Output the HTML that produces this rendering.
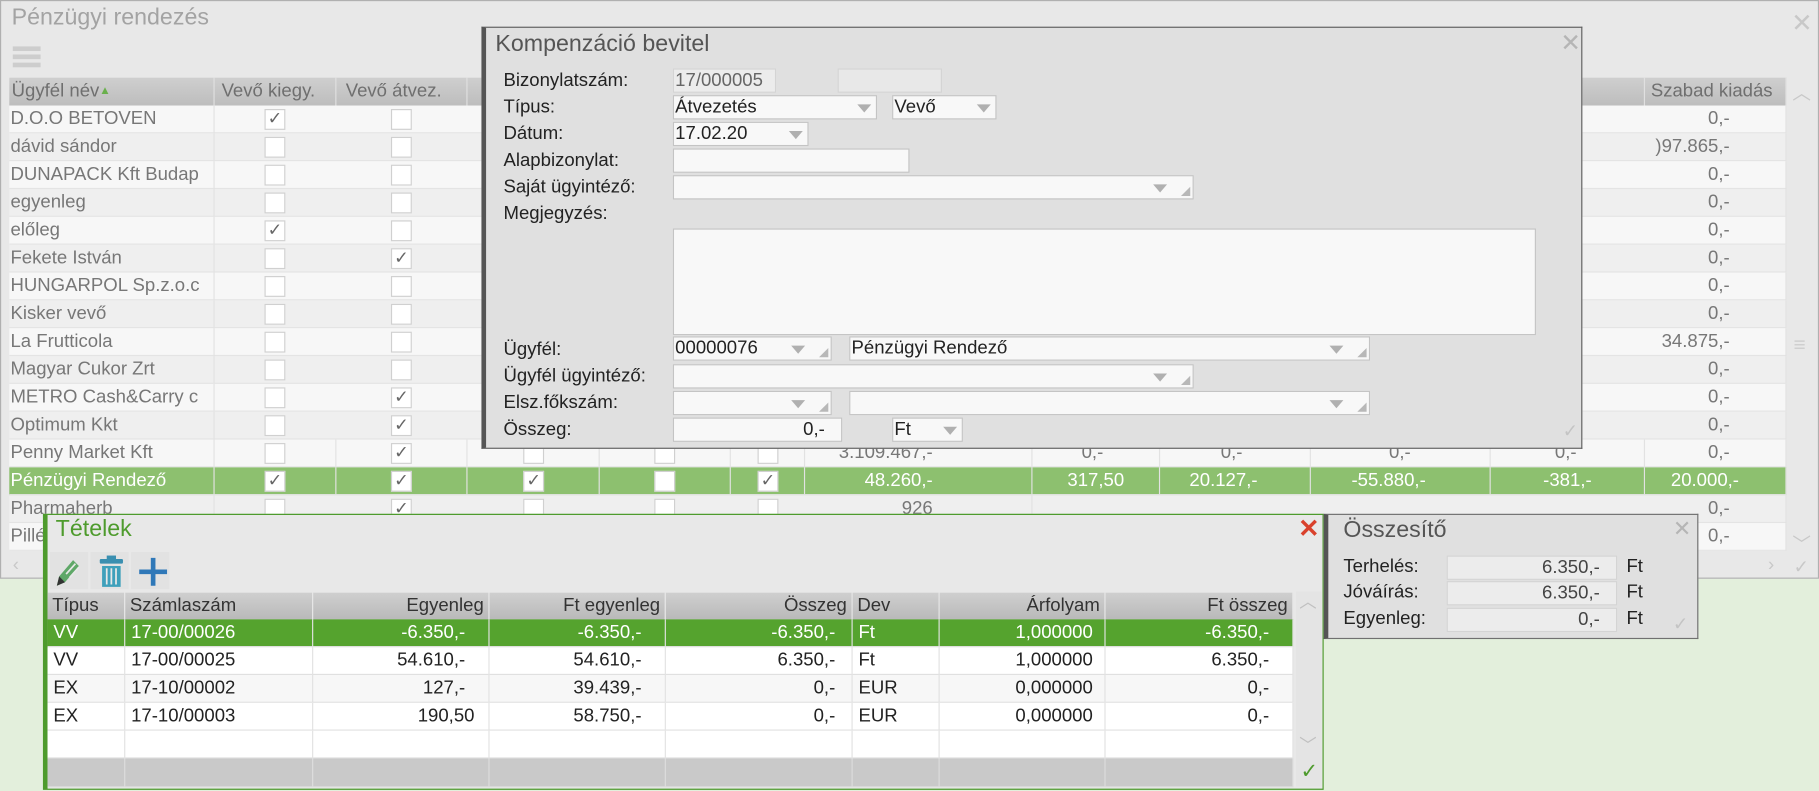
<!DOCTYPE html>
<html><head><meta charset="utf-8">
<style>
*{box-sizing:border-box;margin:0;padding:0}
html,body{width:1819px;height:791px;overflow:hidden;background:#e3efdc}
#s{position:absolute;left:0;top:0;width:1568px;height:682px;transform:scale(1.1601,1.1598);transform-origin:0 0;font-family:"Liberation Sans",sans-serif}
.a{position:absolute}
.main{left:0;top:0;width:1568px;height:499px;background:#e8e8e8;border:1px solid #b0b0b0}
.row{position:absolute;left:8px;width:1532px;height:24px;border-bottom:1px solid #e4e4e4;font-size:16px;color:#777}
.row.o{background:#f7f7f7}.row.e{background:#efefef}
.row.g{background:#8dc06f;color:#fff}
.c{position:absolute;top:0;height:24px;line-height:24px;border-right:1px solid #e2e2e2;overflow:hidden;white-space:nowrap}
.n{padding-left:1px}
.r{text-align:right;padding-right:6px}
.cb{position:absolute;top:3px;width:18px;height:18px;background:#fff;border:1px solid #d0d0d0;font-size:15px;line-height:16px;text-align:center;color:#666}
.hd{position:absolute;left:8px;top:67px;width:1532px;height:24px;background:linear-gradient(#cfcfcf,#bdbdbd);font-size:16px;color:#6f6f6f}
.hd div{position:absolute;top:0;height:24px;line-height:24px;border-right:1px solid #e0e0e0;padding-left:2px;white-space:nowrap;overflow:hidden}
.dlg{left:415px;top:23px;width:949px;height:364px;background:#e0e0e0;border:1px solid #606060;border-left:4px solid #555}
.lb{position:absolute;left:15px;font-size:16px;color:#222}
.in{position:absolute;height:21px;background:#f8f8f8;border:1px solid #c4c4c4;font-size:16px;line-height:19px;color:#222;padding-left:1px;white-space:nowrap}
.dd{position:absolute;top:7px;width:0;height:0;border-left:6px solid transparent;border-right:6px solid transparent;border-top:7px solid #b0b0b0}
.rs{position:absolute;bottom:2px;width:0;height:0;border-left:8px solid transparent;border-bottom:8px solid #b8b8b8}
.tet{left:37px;top:443px;width:1104px;height:238px;background:#e8e8e8;border:1px solid #4e9b2d;border-left:4px solid #4e9b2d}
.th{position:absolute;top:511px;height:23px;background:linear-gradient(#cfcfcf,#b9b9b9);font-size:16px;color:#333;line-height:23px;border-right:1px solid #e6e6e6;padding:0 4px;font-family:"Liberation Sans Narrow","Liberation Sans",sans-serif}
.tr{position:absolute;left:41px;width:1074px;height:24px;border-bottom:1px solid #e0e0e0;font-size:16px;color:#222;font-family:"Liberation Sans Narrow","Liberation Sans",sans-serif}
.tr div{position:absolute;top:0;height:24px;line-height:24px;border-right:1px solid #e2e2e2;padding:0 5px;white-space:nowrap}
.sum{left:1141px;top:443px;width:323px;height:108px;background:#e0e0e0;border:1px solid #707070;border-left:4px solid #555}
</style></head><body><div id="s">

<div class="a main">
 <div class="a" style="left:9px;top:3px;font-size:20px;color:#a3a3a3">Pénzügyi rendezés</div>
 <div class="a" style="left:10px;top:39px;width:24px;height:4px;background:#cdcdcd"></div>
 <div class="a" style="left:10px;top:46px;width:24px;height:4px;background:#cdcdcd"></div>
 <div class="a" style="left:10px;top:53px;width:24px;height:4px;background:#cdcdcd"></div>
 <div class="a" style="left:1543px;top:6px;font-size:22px;color:#c8c8c8">✕</div>
 <div class="a" style="left:1544px;top:66px;font-size:16px;color:#c8c8c8">︿</div>
 <div class="a" style="left:1545px;top:286px;font-size:18px;color:#cfcfcf">≡</div>
 <div class="a" style="left:1544px;top:455px;font-size:16px;color:#c8c8c8">﹀</div>
 <div class="a" style="left:10px;top:478px;font-size:16px;color:#c8c8c8">‹</div>
 <div class="a" style="left:1523px;top:478px;font-size:16px;color:#c8c8c8">›</div>
 <div class="a" style="left:1545px;top:478px;font-size:16px;color:#c8c8c8">✓</div>
</div>

<div class="hd">
 <div style="left:0;width:177px">Ügyfél név<span style="color:#6ab04c;font-size:10px;vertical-align:top">▲</span></div>
 <div style="left:177px;width:105px;padding-left:6px">Vevő kiegy.</div>
 <div style="left:282px;width:113px;padding-left:8px">Vevő átvez.</div>
 <div style="left:395px;width:114px"></div>
 <div style="left:1285px;width:125px;padding-left:0">Egyenleg</div>
 <div style="left:1410px;width:122px;padding-left:5px">Szabad kiadás</div>
</div>

<div class="row o" style="top:91px"><div class="c n" style="left:0;width:177px">D.O.O BETOVEN</div><div class="cb" style="left:220px">✓</div><div class="cb" style="left:329px"></div><div class="c r" style="left:1410px;width:122px;padding-right:48px">0,-</div></div>
<div class="row e" style="top:115px"><div class="c n" style="left:0;width:177px">dávid sándor</div><div class="cb" style="left:220px"></div><div class="cb" style="left:329px"></div><div class="c r" style="left:1410px;width:122px;padding-right:48px">)97.865,-</div></div>
<div class="row o" style="top:139px"><div class="c n" style="left:0;width:177px">DUNAPACK Kft Budap</div><div class="cb" style="left:220px"></div><div class="cb" style="left:329px"></div><div class="c r" style="left:1410px;width:122px;padding-right:48px">0,-</div></div>
<div class="row e" style="top:163px"><div class="c n" style="left:0;width:177px">egyenleg</div><div class="cb" style="left:220px"></div><div class="cb" style="left:329px"></div><div class="c r" style="left:1410px;width:122px;padding-right:48px">0,-</div></div>
<div class="row o" style="top:187px"><div class="c n" style="left:0;width:177px">előleg</div><div class="cb" style="left:220px">✓</div><div class="cb" style="left:329px"></div><div class="c r" style="left:1410px;width:122px;padding-right:48px">0,-</div></div>
<div class="row e" style="top:211px"><div class="c n" style="left:0;width:177px">Fekete István</div><div class="cb" style="left:220px"></div><div class="cb" style="left:329px">✓</div><div class="c r" style="left:1410px;width:122px;padding-right:48px">0,-</div></div>
<div class="row o" style="top:235px"><div class="c n" style="left:0;width:177px">HUNGARPOL Sp.z.o.c</div><div class="cb" style="left:220px"></div><div class="cb" style="left:329px"></div><div class="c r" style="left:1410px;width:122px;padding-right:48px">0,-</div></div>
<div class="row e" style="top:259px"><div class="c n" style="left:0;width:177px">Kisker vevő</div><div class="cb" style="left:220px"></div><div class="cb" style="left:329px"></div><div class="c r" style="left:1410px;width:122px;padding-right:48px">0,-</div></div>
<div class="row o" style="top:283px"><div class="c n" style="left:0;width:177px">La Frutticola</div><div class="cb" style="left:220px"></div><div class="cb" style="left:329px"></div><div class="c r" style="left:1410px;width:122px;padding-right:48px">34.875,-</div></div>
<div class="row e" style="top:307px"><div class="c n" style="left:0;width:177px">Magyar Cukor Zrt</div><div class="cb" style="left:220px"></div><div class="cb" style="left:329px"></div><div class="c r" style="left:1410px;width:122px;padding-right:48px">0,-</div></div>
<div class="row o" style="top:331px"><div class="c n" style="left:0;width:177px">METRO Cash&amp;Carry c</div><div class="cb" style="left:220px"></div><div class="cb" style="left:329px">✓</div><div class="c r" style="left:1410px;width:122px;padding-right:48px">0,-</div></div>
<div class="row e" style="top:355px"><div class="c n" style="left:0;width:177px">Optimum Kkt</div><div class="cb" style="left:220px"></div><div class="cb" style="left:329px">✓</div><div class="c r" style="left:1410px;width:122px;padding-right:48px">0,-</div></div>
<div class="row o" style="top:379px"><div class="c n" style="left:0;width:177px">Penny Market Kft</div><div class="c" style="left:177px;width:105px"></div><div class="c" style="left:282px;width:113px"></div><div class="c" style="left:395px;width:114px"></div><div class="c" style="left:509px;width:113px"></div><div class="c" style="left:622px;width:64px"></div><div class="cb" style="left:220px"></div><div class="cb" style="left:329px">✓</div><div class="cb" style="left:443px"></div><div class="cb" style="left:556px"></div><div class="cb" style="left:645px"></div>
 <div class="c r" style="left:686px;width:196px;padding-right:85px">3.109.467,-</div><div class="c r" style="left:882px;width:110px;padding-right:48px">0,-</div><div class="c r" style="left:992px;width:130px;padding-right:58px">0,-</div><div class="c r" style="left:1122px;width:155px;padding-right:68px">0,-</div><div class="c r" style="left:1277px;width:133px;padding-right:58px">0,-</div><div class="c r" style="left:1410px;width:122px;padding-right:48px">0,-</div></div>
<div class="row g" style="top:403px"><div class="c n" style="left:0;width:177px">Pénzügyi Rendező</div><div class="c" style="left:177px;width:105px"></div><div class="c" style="left:282px;width:113px"></div><div class="c" style="left:395px;width:114px"></div><div class="c" style="left:509px;width:113px"></div><div class="c" style="left:622px;width:64px"></div><div class="cb" style="left:220px">✓</div><div class="cb" style="left:329px">✓</div><div class="cb" style="left:443px">✓</div><div class="cb" style="left:556px"></div><div class="cb" style="left:645px">✓</div>
 <div class="c r" style="left:686px;width:196px;padding-right:85px">48.260,-</div><div class="c r" style="left:882px;width:110px;padding-right:30px">317,50</div><div class="c r" style="left:992px;width:130px;padding-right:45px">20.127,-</div><div class="c r" style="left:1122px;width:155px;padding-right:55px">-55.880,-</div><div class="c r" style="left:1277px;width:133px;padding-right:45px">-381,-</div><div class="c r" style="left:1410px;width:122px;padding-right:40px">20.000,-</div></div>
<div class="row e" style="top:427px"><div class="c n" style="left:0;width:177px">Pharmaherb</div><div class="cb" style="left:220px"></div><div class="cb" style="left:329px">✓</div><div class="cb" style="left:443px"></div><div class="cb" style="left:556px"></div><div class="cb" style="left:645px"></div><div class="c r" style="left:686px;width:196px;padding-right:85px">926</div><div class="c r" style="left:1410px;width:122px;padding-right:48px">0,-</div></div>
<div class="row o" style="top:451px"><div class="c n" style="left:0;width:177px">Pillé</div><div class="c r" style="left:1410px;width:122px;padding-right:48px">0,-</div></div>

<div class="a dlg">
 <div class="a" style="left:8px;top:3px;font-size:20px;color:#555">Kompenzáció bevitel</div>
 <div class="a" style="left:926px;top:1px;font-size:21px;color:#b5b5b5">✕</div>
 <div class="a" style="left:928px;top:338px;font-size:16px;color:#c4c4c4">✓</div>
 <div class="lb" style="top:37px">Bizonylatszám:</div>
 <div class="lb" style="top:60px">Típus:</div>
 <div class="lb" style="top:83px">Dátum:</div>
 <div class="lb" style="top:106px">Alapbizonylat:</div>
 <div class="lb" style="top:129px">Saját ügyintéző:</div>
 <div class="lb" style="top:152px">Megjegyzés:</div>
 <div class="lb" style="top:269px">Ügyfél:</div>
 <div class="lb" style="top:292px">Ügyfél ügyintéző:</div>
 <div class="lb" style="top:315px">Elsz.főkszám:</div>
 <div class="lb" style="top:338px">Összeg:</div>
 <div class="in" style="left:161px;top:35px;width:89px;background:#ececec;color:#666;border-color:#d4d4d4">17/000005</div>
 <div class="in" style="left:303px;top:35px;width:90px;background:#e8e8e8;border-color:#d4d4d4"></div>
 <div class="in" style="left:161px;top:58px;width:176px">Átvezetés<div class="dd" style="right:4px"></div></div>
 <div class="in" style="left:350px;top:58px;width:90px">Vevő<div class="dd" style="right:4px"></div></div>
 <div class="in" style="left:161px;top:81px;width:117px">17.02.20<div class="dd" style="right:4px"></div></div>
 <div class="in" style="left:161px;top:104px;width:204px"></div>
 <div class="in" style="left:161px;top:127px;width:449px"><div class="dd" style="right:22px"></div><div class="rs" style="right:2px"></div></div>
 <div class="in" style="left:161px;top:173px;width:744px;height:92px;background:#f8f8f8"></div>
 <div class="in" style="left:161px;top:266px;width:137px">00000076<div class="dd" style="right:22px"></div><div class="rs" style="right:2px"></div></div>
 <div class="in" style="left:313px;top:266px;width:449px">Pénzügyi Rendező<div class="dd" style="right:22px"></div><div class="rs" style="right:2px"></div></div>
 <div class="in" style="left:161px;top:290px;width:449px"><div class="dd" style="right:22px"></div><div class="rs" style="right:2px"></div></div>
 <div class="in" style="left:161px;top:313px;width:137px"><div class="dd" style="right:22px"></div><div class="rs" style="right:2px"></div></div>
 <div class="in" style="left:313px;top:313px;width:449px"><div class="dd" style="right:22px"></div><div class="rs" style="right:2px"></div></div>
 <div class="in" style="left:161px;top:336px;width:146px;text-align:right;padding-right:14px">0,-</div>
 <div class="in" style="left:350px;top:336px;width:61px">Ft<div class="dd" style="right:4px"></div></div>
</div>

<div class="a tet">
 <div class="a" style="left:7px;top:1px;font-size:20px;color:#4e9b2d;font-family:'Liberation Sans Narrow','Liberation Sans',sans-serif">Tételek</div>
 <div class="a" style="left:1078px;top:-1px;font-size:22px;color:#d9412c;font-weight:bold">✕</div>
 <div class="a" style="left:2px;top:32px;width:33px;height:32px;background:#e2e2e2"></div>
 <div class="a" style="left:37px;top:32px;width:33px;height:32px;background:#e2e2e2"></div>
 <div class="a" style="left:72px;top:32px;width:33px;height:32px;background:#e2e2e2"></div>
 <svg class="a" style="left:4px;top:34px" width="30" height="30" viewBox="0 0 30 30"><path d="M4 27 L6 19 L18 5 L23 10 L11 24 Z" fill="#5fa868"/><path d="M4 27 L6 19 L11 24 Z" fill="#333"/><path d="M12 17 L20 8 M15 20 L23 11" stroke="#e8e8e8" stroke-width="1.5"/></svg>
 <svg class="a" style="left:42px;top:34px" width="26" height="30" viewBox="0 0 26 30"><rect x="9" y="1" width="8" height="3" fill="#3a8fb0"/><rect x="3" y="4" width="20" height="4" rx="1" fill="#3a8fb0"/><path d="M5 10 H21 V28 H5 Z" fill="#3ea0bb"/><path d="M9 12 V26 M13 12 V26 M17 12 V26" stroke="#e8e8e8" stroke-width="1.5"/></svg>
 <svg class="a" style="left:77px;top:35px" width="28" height="28" viewBox="0 0 28 28"><path d="M14 2 V26 M2 14 H26" stroke="#2f78b8" stroke-width="4"/></svg>
 <div class="a" style="left:1076px;top:66px;width:22px;height:168px;background:#e4e4e4"></div>
 <div class="a" style="left:1079px;top:64px;font-size:15px;color:#c0c0c0">︿</div>
 <div class="a" style="left:1079px;top:188px;font-size:15px;color:#c0c0c0">﹀</div>
 <div class="a" style="left:1080px;top:211px;font-size:18px;color:#4e9b2d">✓</div>
</div>
<div class="th" style="left:41px;width:67px">Típus</div>
<div class="th" style="left:108px;width:162px">Számlaszám</div>
<div class="th" style="left:270px;width:152px;text-align:right">Egyenleg</div>
<div class="th" style="left:422px;width:152px;text-align:right">Ft egyenleg</div>
<div class="th" style="left:574px;width:161px;text-align:right">Összeg</div>
<div class="th" style="left:735px;width:75px">Dev</div>
<div class="th" style="left:810px;width:143px;text-align:right">Árfolyam</div>
<div class="th" style="left:953px;width:162px;text-align:right">Ft összeg</div>

<div class="tr" style="top:534px;background:#55a32e;color:#fff"><div style="left:0;width:67px">VV</div><div style="left:67px;width:162px">17-00/00026</div><div style="left:229px;width:152px;text-align:right;padding-right:20px">-6.350,-</div><div style="left:381px;width:152px;text-align:right;padding-right:20px">-6.350,-</div><div style="left:533px;width:161px;text-align:right;padding-right:14px">-6.350,-</div><div style="left:694px;width:75px">Ft</div><div style="left:769px;width:143px;text-align:right;padding-right:10px">1,000000</div><div style="left:912px;width:162px;text-align:right;padding-right:20px">-6.350,-</div></div>
<div class="tr" style="top:558px;background:#fff"><div style="left:0;width:67px">VV</div><div style="left:67px;width:162px">17-00/00025</div><div style="left:229px;width:152px;text-align:right;padding-right:20px">54.610,-</div><div style="left:381px;width:152px;text-align:right;padding-right:20px">54.610,-</div><div style="left:533px;width:161px;text-align:right;padding-right:14px">6.350,-</div><div style="left:694px;width:75px">Ft</div><div style="left:769px;width:143px;text-align:right;padding-right:10px">1,000000</div><div style="left:912px;width:162px;text-align:right;padding-right:20px">6.350,-</div></div>
<div class="tr" style="top:582px;background:#f7f7f7"><div style="left:0;width:67px">EX</div><div style="left:67px;width:162px">17-10/00002</div><div style="left:229px;width:152px;text-align:right;padding-right:20px">127,-</div><div style="left:381px;width:152px;text-align:right;padding-right:20px">39.439,-</div><div style="left:533px;width:161px;text-align:right;padding-right:14px">0,-</div><div style="left:694px;width:75px">EUR</div><div style="left:769px;width:143px;text-align:right;padding-right:10px">0,000000</div><div style="left:912px;width:162px;text-align:right;padding-right:20px">0,-</div></div>
<div class="tr" style="top:606px;background:#fff"><div style="left:0;width:67px">EX</div><div style="left:67px;width:162px">17-10/00003</div><div style="left:229px;width:152px;text-align:right;padding-right:12px">190,50</div><div style="left:381px;width:152px;text-align:right;padding-right:20px">58.750,-</div><div style="left:533px;width:161px;text-align:right;padding-right:14px">0,-</div><div style="left:694px;width:75px">EUR</div><div style="left:769px;width:143px;text-align:right;padding-right:10px">0,000000</div><div style="left:912px;width:162px;text-align:right;padding-right:20px">0,-</div></div>
<div class="tr" style="top:630px;background:#fff"><div style="left:0;width:67px"></div><div style="left:67px;width:162px"></div><div style="left:229px;width:152px"></div><div style="left:381px;width:152px"></div><div style="left:533px;width:161px"></div><div style="left:694px;width:75px"></div><div style="left:769px;width:143px"></div><div style="left:912px;width:162px"></div></div>
<div class="tr" style="top:654px;background:#c9c9c9;height:25px"><div style="left:0;width:67px;border-color:#ddd"></div><div style="left:67px;width:162px;border-color:#ddd"></div><div style="left:229px;width:152px;border-color:#ddd"></div><div style="left:381px;width:152px;border-color:#ddd"></div><div style="left:533px;width:161px;border-color:#ddd"></div><div style="left:694px;width:75px;border-color:#ddd"></div><div style="left:769px;width:143px;border-color:#ddd"></div><div style="left:912px;width:162px;border-color:#ddd"></div></div>

<div class="a sum">
 <div class="a" style="left:13px;top:2px;font-size:20px;color:#555">Összesítő</div>
 <div class="a" style="left:297px;top:1px;font-size:19px;color:#b5b5b5">✕</div>
 <div class="a" style="left:297px;top:84px;font-size:16px;color:#c4c4c4">✓</div>
 <div class="lb" style="left:13px;top:36px">Terhelés:</div>
 <div class="lb" style="left:13px;top:58px">Jóváírás:</div>
 <div class="lb" style="left:13px;top:81px">Egyenleg:</div>
 <div class="in" style="left:102px;top:35px;width:147px;text-align:right;padding-right:14px;background:#ececec;color:#444;border-color:#d4d4d4">6.350,-</div>
 <div class="in" style="left:102px;top:57px;width:147px;text-align:right;padding-right:14px;background:#ececec;color:#444;border-color:#d4d4d4">6.350,-</div>
 <div class="in" style="left:102px;top:80px;width:147px;text-align:right;padding-right:14px;background:#ececec;color:#444;border-color:#d4d4d4">0,-</div>
 <div class="lb" style="left:257px;top:36px">Ft</div>
 <div class="lb" style="left:257px;top:58px">Ft</div>
 <div class="lb" style="left:257px;top:81px">Ft</div>
</div>

</div></body></html>
